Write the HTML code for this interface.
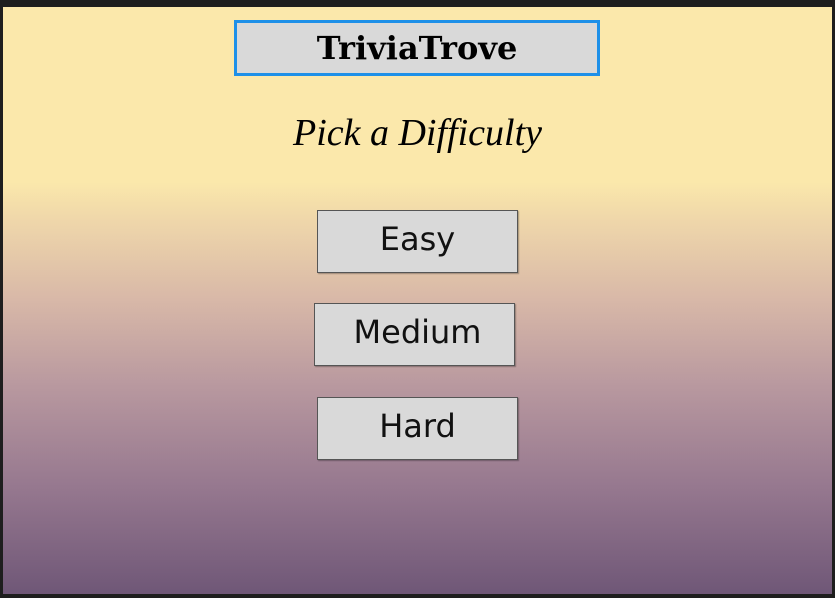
<!DOCTYPE html>
<html><head><style>
html,body{margin:0;padding:0;width:835px;height:598px;background:#1e1e1e;overflow:hidden;}
.main{position:absolute;left:3px;top:7px;width:829px;height:587px;
background:linear-gradient(to bottom,#fbe8ab 0px,#fbe8ab 175px,#f0d8aa 210px,#d9b9a8 290px,#b8989f 380px,#96788f 480px,#6f5777 587px);}
.title{position:absolute;left:234px;top:20px;width:360px;height:50px;border:3px solid #1e90e8;background:#d9d9d9;
text-align:center;font:bold 32px/50px "DejaVu Serif","Liberation Serif",serif;color:#000;}
.sub{position:absolute;left:0;width:835px;top:108px;text-align:center;font:italic 38px/50px "Liberation Serif",serif;color:#000;}
.btn{position:absolute;width:199px;height:61px;background:#d9d9d9;border:1px solid #555;box-shadow:1px 1px 1px rgba(0,0,0,.3);
text-align:center;font:32px/56px "DejaVu Sans","Liberation Sans",sans-serif;color:#111;box-sizing:content-box;}
</style></head><body>
<div class="main"></div>
<div class="title">TriviaTrove</div>
<div class="sub">Pick a Difficulty</div>
<div class="btn" style="left:317px;top:210px;">Easy</div>
<div class="btn" style="left:314px;top:303px;"><span style="position:relative;left:3px">Medium</span></div>
<div class="btn" style="left:317px;top:397px;">Hard</div>
</body></html>
